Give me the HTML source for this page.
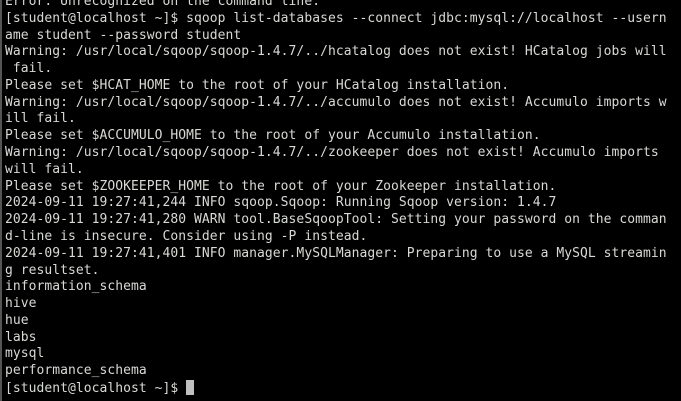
<!DOCTYPE html>
<html><head><style>
html,body{margin:0;padding:0;background:#000;width:681px;height:401px;overflow:hidden}
#t{position:absolute;left:5px;top:-6px;font-family:"DejaVu Sans Mono","Liberation Mono",monospace;font-size:13px;line-height:16.78px;letter-spacing:0.05px;color:#d8dad5;white-space:pre}
#b{position:absolute;left:0;top:0;width:2px;height:401px;background:#555}
.c{display:inline-block;width:8px;height:15px;background:#c0c0c0;vertical-align:-3px}
</style></head><body><div id="b"></div><div id="t">Error: Unrecognized on the command line.
[student@localhost ~]$ sqoop list-databases --connect jdbc:mysql://localhost --usern
ame student --password student
Warning: /usr/local/sqoop/sqoop-1.4.7/../hcatalog does not exist! HCatalog jobs will
 fail.
Please set $HCAT_HOME to the root of your HCatalog installation.
Warning: /usr/local/sqoop/sqoop-1.4.7/../accumulo does not exist! Accumulo imports w
ill fail.
Please set $ACCUMULO_HOME to the root of your Accumulo installation.
Warning: /usr/local/sqoop/sqoop-1.4.7/../zookeeper does not exist! Accumulo imports
will fail.
Please set $ZOOKEEPER_HOME to the root of your Zookeeper installation.
2024-09-11 19:27:41,244 INFO sqoop.Sqoop: Running Sqoop version: 1.4.7
2024-09-11 19:27:41,280 WARN tool.BaseSqoopTool: Setting your password on the comman
d-line is insecure. Consider using -P instead.
2024-09-11 19:27:41,401 INFO manager.MySQLManager: Preparing to use a MySQL streamin
g resultset.
information_schema
hive
hue
labs
mysql
performance_schema
[student@localhost ~]$ <span class="c"></span></div></body></html>
